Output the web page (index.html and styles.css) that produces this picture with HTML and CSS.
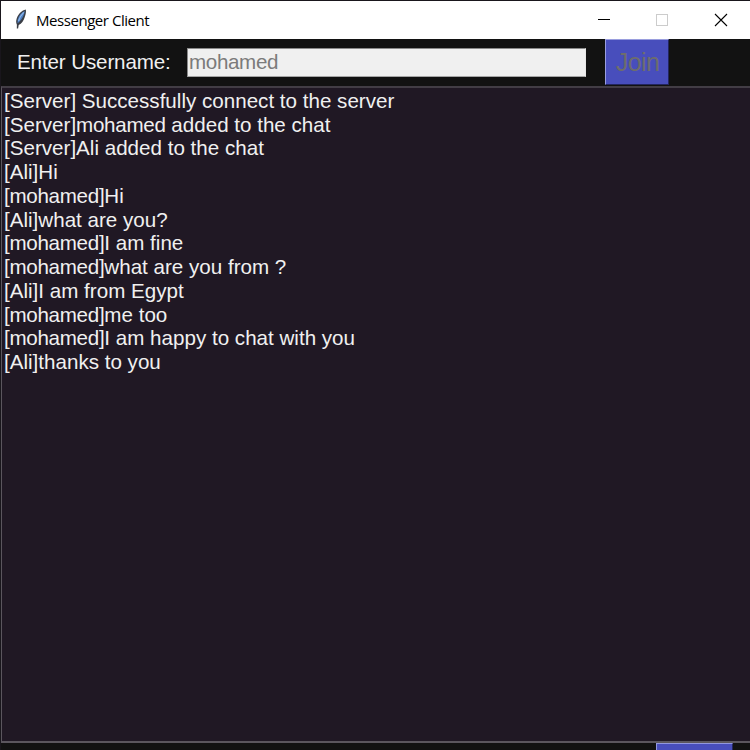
FILE: index.html
```
<!DOCTYPE html>
<html lang="en">
<head>
<meta charset="utf-8">
<title>Messenger Client</title>
<link rel="stylesheet" href="styles.css">
</head>
<body>
<div class="window">
  <header class="titlebar">
    <svg class="feather" width="14" height="21" viewBox="0 0 14 21">
      <path d="M11.800.6C8 1.300 4.300 5 2.700 9.500c-.8 2.300-.7 4.500.2 6.200l-.1 3.800 1.300.1.600-3.700c3-1 4.900-4.300 6-7.700C11.800 5.500 12.300 2.500 11.800.6Z" fill="#3a3e46"/>
      <path d="M10.800 2C7.200 3.700 4.700 7 3.700 10.800l-.2 3.400C6 12.500 9.600 8.500 10.800 2Z" fill="#4d80c6"/>
      <path d="M9.700 3.300C7 6 5.500 9 4.500 12" fill="none" stroke="#8fb6e8" stroke-width="1.200"/>
    </svg>
    <h1 class="title">Messenger Client</h1>
    <svg class="controls" width="132" height="14" viewBox="0 0 132 14" fill="none" shape-rendering="crispEdges">
      <path d="M0 6.500h12" stroke="#000"/>
      <rect x="58.500" y="1.500" width="11" height="11" stroke="#ccc"/>
      <path d="M117 1l12 12M129 1l-12 12" stroke="#000" stroke-width="1.100" shape-rendering="auto"/>
    </svg>
  </header>
  <form class="userbar">
    <label class="label" for="username">Enter Username:</label>
    <input class="entry" id="username" value="mohamed" disabled>
    <button class="join" type="button" disabled>Join</button>
  </form>
  <main class="log">
    <div class="line">[Server] Successfully connect to the server</div>
    <div class="line">[Server]<span class="name">mohamed</span> added to the chat</div>
    <div class="line">[Server]Ali added to the chat</div>
    <div class="line">[Ali]Hi</div>
    <div class="line"><span class="name">[mohamed]</span>Hi</div>
    <div class="line">[Ali]what are you?</div>
    <div class="line"><span class="name">[mohamed]</span>I am fine</div>
    <div class="line"><span class="name">[mohamed]</span>what are you from ?</div>
    <div class="line">[Ali]I am from Egypt</div>
    <div class="line"><span class="name">[mohamed]</span>me too</div>
    <div class="line"><span class="name">[mohamed]</span>I am happy to chat with you</div>
    <div class="line">[Ali]thanks to you</div>
  </main>
  <footer class="sendbar"><div class="send"></div></footer>
</div>
</body>
</html>
```
FILE: styles.css
```
* { box-sizing: border-box; }
body { margin: 0; overflow: hidden; background: #121212; }
.window {
  width: 750px;
  height: 750px;
  display: flex;
  flex-direction: column;
  overflow: hidden;
  border-top: 1px solid #19161c;
  border-left: 1px solid #19161c;
  font-family: "Liberation Sans", Arial, sans-serif;
}
.titlebar {
  flex: none;
  height: 38px;
  display: flex;
  align-items: center;
  padding: 0 20px 0 13px;
  background: #fff;
}
.feather { margin-top: -1px; }
.title {
  margin: -1px auto 0 8px;
  font: 400 15px/20px "Open Sans", "Noto Sans", sans-serif;
  letter-spacing: -0.45px;
  color: #000;
}
.userbar {
  flex: none;
  height: 47px;
  display: flex;
  align-items: flex-start;
  background: #121212;
}
.label {
  width: 170px;
  margin: 8px 0 0 16px;
  font-size: 20.6px;
  line-height: 30px;
  letter-spacing: -0.13px;
  color: #f0f0f0;
}
.entry {
  width: 399px;
  height: 29px;
  margin: 9px 0 0;
  padding: 0 1px 1px;
  border: 1px solid;
  border-color: #8a8a8a #e8e8e8 #a5a5a5 #8a8a8a;
  border-radius: 0;
  background: #f0f0f0;
  font: 20.6px "Liberation Sans", Arial, sans-serif;
  letter-spacing: -0.35px;
  color: #7b7b7b;
}
.join {
  width: 64px;
  height: 46px;
  margin: 0 0 0 19px;
  padding: 0 0 0 1px;
  border: 1px solid;
  border-color: #9a9ede #23265e #23265e #9a9ede;
  border-radius: 0;
  background: #484ebc;
  font: 25px "Liberation Sans", Arial, sans-serif;
  letter-spacing: -0.6px;
  color: #6d6d6d;
}
.log {
  flex: none;
  height: 657px;
  padding: 1px 0 0 2px;
  border: solid #5b565e;
  border-width: 2px 0 2px 1px;
  border-top-color: #423d45;
  background: #201824;
  font-size: 20.6px;
  line-height: 23.73px;
  color: #f0f0f0;
}
.line { white-space: pre; }
.name { letter-spacing: -0.3px; }
.sendbar {
  flex: none;
  height: 7px;
  display: flex;
  justify-content: flex-end;
  padding-right: 17px;
  background: #121212;
}
.send {
  width: 77px;
  height: 7px;
  border: solid #9297df;
  border-width: 1px 1px 0;
  border-right-color: #23265e;
  background: #484ebc;
}
```
